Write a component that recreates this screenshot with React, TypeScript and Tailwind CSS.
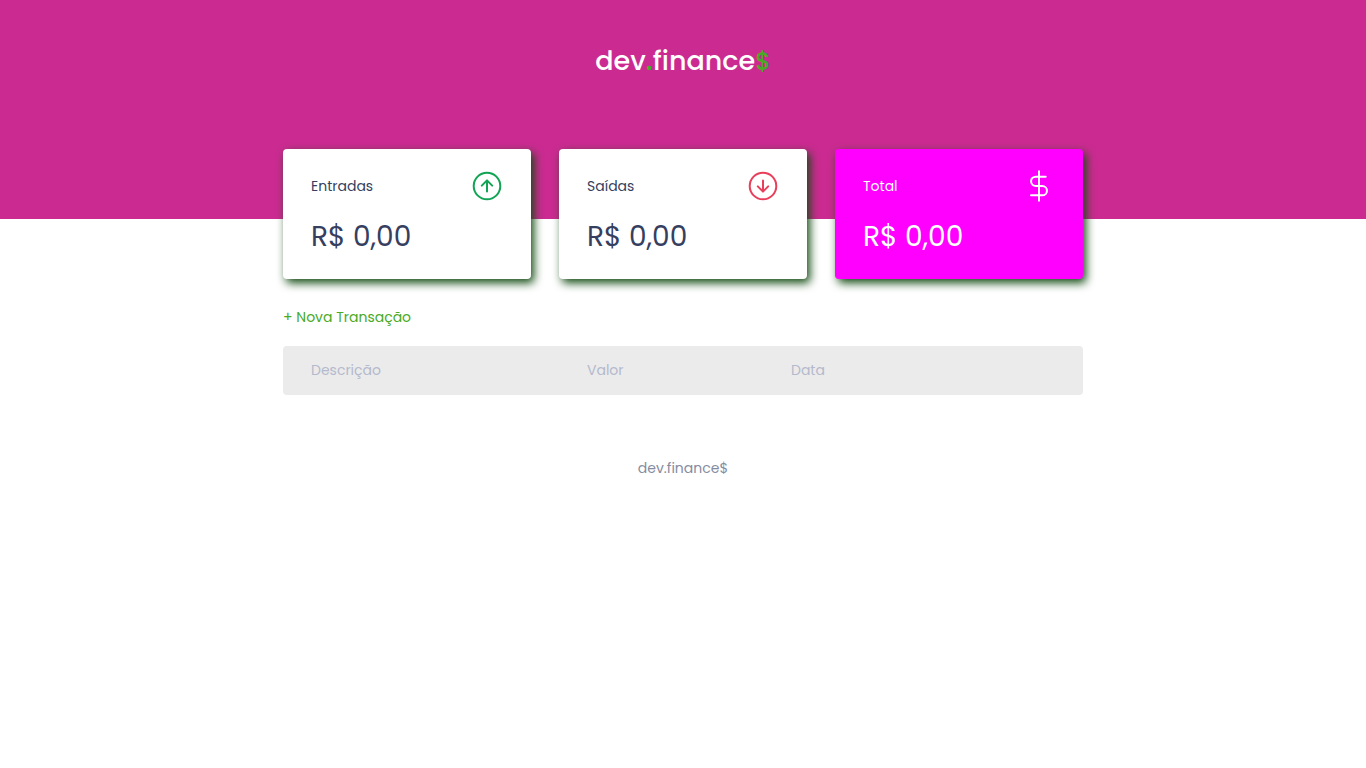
import type { ReactNode } from "react";

const stroke = {
  fill: "none",
  stroke: "currentColor",
  strokeWidth: 2,
  strokeLinecap: "round" as const,
  strokeLinejoin: "round" as const,
};

function IncomeIcon() {
  return (
    <svg viewBox="0 0 32 32" className="size-8 text-[#12a454]" aria-hidden="true" {...stroke}>
      <circle cx="16" cy="16" r="13.3" />
      <path d="M16 21.5V10.7M10.8 15.6L16 10.4L21.2 15.6" />
    </svg>
  );
}

function ExpenseIcon() {
  return (
    <svg viewBox="0 0 32 32" className="size-8 text-[#e83f5b]" aria-hidden="true" {...stroke}>
      <circle cx="16" cy="16" r="13.3" />
      <path d="M16 10.5V21.3M10.8 16.4L16 21.6L21.2 16.4" />
    </svg>
  );
}

function TotalIcon() {
  return (
    <svg viewBox="0 0 32 32" className="size-8 text-white" aria-hidden="true" {...stroke}>
      <path d="M16 1.3V30.7M22.7 6.7H12.7A4.65 4.65 0 0 0 12.7 16H19.3A4.65 4.65 0 0 1 19.3 25.3H8" />
    </svg>
  );
}

type CardProps = { title: string; amount: string; icon: ReactNode; highlight?: boolean };

function Card({ title, amount, icon, highlight = false }: CardProps) {
  const tone = highlight ? "bg-[#ff00ff] text-white" : "bg-white text-[#363f5f]";
  return (
    <div
      className={`rounded-sm px-7 py-[21px] shadow-[3px_4px_10px_#124a12] ${tone}`}
    >
      <h3 className="flex items-center justify-between text-sm leading-[21px] font-normal">
        <span>{title}</span>
        {icon}
      </h3>
      <p className="mt-[14px] text-[28px] leading-[42px]">{amount}</p>
    </div>
  );
}

export default function App() {
  return (
    <div className="min-h-screen bg-white font-[Poppins,Inter,'Open_Sans',sans-serif] text-sm leading-[21px]">
      <header className="h-[219px] bg-[#cb2b91] pt-10 text-center">
        <h1 className="text-[27px] leading-[42px] font-medium text-white">
          dev<span className="font-semibold text-[#49aa26]">.</span>finance
          <span className="text-2xl leading-[42px] text-[#49aa26]">$</span>
        </h1>
      </header>

      <main className="mx-auto w-full max-w-[800px]">
        <section aria-label="Balanço" className="-mt-[70px] grid grid-cols-1 gap-7 sm:grid-cols-3">
          <Card title="Entradas" amount="R$ 0,00" icon={<IncomeIcon />} />
          <Card title="Saídas" amount="R$ 0,00" icon={<ExpenseIcon />} />
          <Card title="Total" amount="R$ 0,00" icon={<TotalIcon />} highlight />
        </section>

        <section aria-label="Transações" className="mt-7">
          <a href="#nova" className="inline-block text-[#49aa26]">
            + Nova Transação
          </a>
          <table className="mt-[18px] w-full table-fixed border-separate border-spacing-0 text-left text-[#b4b9cd]">
            <thead>
              <tr>
                <th className="w-[34.5%] rounded-l-sm bg-[#ebebeb] px-7 py-[14px] font-normal">
                  Descrição
                </th>
                <th className="w-[25.5%] bg-[#ebebeb] px-7 py-[14px] font-normal">Valor</th>
                <th className="bg-[#ebebeb] px-7 py-[14px] font-normal">Data</th>
                <th className="rounded-r-sm bg-[#ebebeb] px-7 py-[14px] font-normal"></th>
              </tr>
            </thead>
          </table>
        </section>
      </main>

      <footer className="pt-[63px] pb-8 text-center text-[#868c9f]">
        <p>dev.finance$</p>
      </footer>
    </div>
  );
}
